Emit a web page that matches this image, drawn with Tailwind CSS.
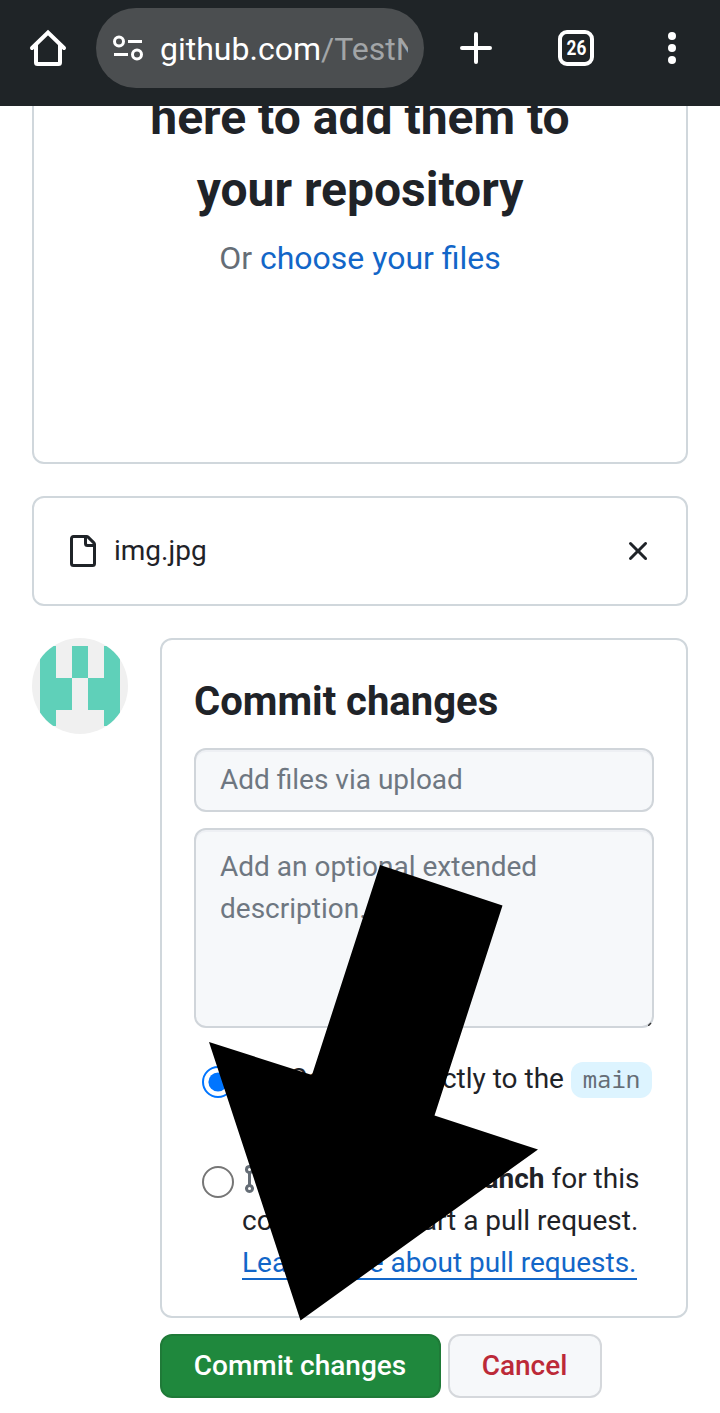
<!DOCTYPE html>
<html lang="en">
<head>
<meta charset="utf-8">
<title>Upload files</title>
<script src="https://cdn.jsdelivr.net/npm/@tailwindcss/browser@4"></script>
</head>
<body class="relative h-[1413px] w-[720px] overflow-hidden bg-white font-[Roboto,sans-serif] text-[28px] leading-[42px] text-[#1f2328]">
<header class="relative z-10 flex h-[106px] items-start bg-[#1f2427] text-white">
  <svg class="ml-7 mt-7 size-10 shrink-0" viewBox="0 0 40 40" fill="none" stroke="currentColor" stroke-width="4" stroke-linecap="round" stroke-linejoin="round"><path d="M4 20 20 4.600 36 20" stroke-linejoin="miter"/><path d="M8 17V34.500Q8 36 9.500 36H30.500Q32 36 32 34.500V17" stroke-linecap="butt"/></svg>
  <div class="ml-7 mt-2 flex h-20 w-[328px] items-center rounded-full bg-[#4b4e50] pl-4">
    <svg class="size-8 shrink-0" viewBox="0 0 32 32" fill="none" stroke="currentColor" stroke-width="3"><circle cx="7" cy="9.500" r="4.500"/><path d="M16 9.500h14M2 22.500h14"/><circle cx="25" cy="22.500" r="4.500"/></svg>
    <div class="ml-4 mt-0.5 w-[248px] overflow-hidden whitespace-nowrap text-[32px] leading-[40px]">github.com<span class="text-[#a2a5a7]">/TestN</span></div>
  </div>
  <svg class="ml-9 mt-8 size-8 shrink-0" viewBox="0 0 32 32" stroke="currentColor" stroke-width="4" stroke-linecap="round"><path d="M2 16h28M16 2v28"/></svg>
  <div class="ml-[66px] mt-[30px] flex size-9 shrink-0 items-center justify-center rounded-[9px] border-4 border-white"><span class="scale-x-[.86] text-[20px] leading-5 font-bold">26</span></div>
  <svg class="ml-[74px] mt-8 h-8 w-2 shrink-0" viewBox="0 0 8 32" fill="currentColor"><circle cx="4" cy="4" r="4"/><circle cx="4" cy="16" r="4"/><circle cx="4" cy="28" r="4"/></svg>
</header>

<main class="flex flex-col px-8">
  <section class="-mt-[70px] h-[428px] rounded-xl border-2 border-[#d0d7dc] px-16 pt-11 text-center">
    <h1 class="text-[48px] leading-[72px] font-bold">here to add them to your repository</h1>
    <p class="mt-2 text-[32px] leading-[48px] text-[#656d76]">Or <a class="text-[#1266c8]">choose your files</a></p>
  </section>

  <section class="mt-8 flex h-[110px] items-center rounded-xl border-2 border-[#d0d7dc] px-8">
    <svg class="size-8 shrink-0" viewBox="0 0 16 16" fill="currentColor"><path d="M2 1.750C2 .784 2.784 0 3.750 0h6.586c.464 0 .909.184 1.237.513l2.914 2.914c.329.328.513.773.513 1.237v9.586A1.750 1.750 0 0 1 13.250 16h-9.500A1.750 1.750 0 0 1 2 14.250Zm1.750-.25a.25.25 0 0 0-.25.25v12.500c0 .138.112.25.25.25h9.500a.25.25 0 0 0 .25-.25V6h-2.750A1.750 1.750 0 0 1 9 4.250V1.500Zm6.750.062V4.250c0 .138.112.25.25.25h2.688l-.011-.013-2.914-2.914-.013-.011Z"/></svg>
    <span class="ml-4 flex-1">img.jpg</span>
    <svg class="size-8 shrink-0" viewBox="0 0 16 16" fill="currentColor"><path d="M3.720 3.720a.75.75 0 0 1 1.060 0L8 6.940l3.220-3.220a.749.749 0 0 1 1.275.326.749.749 0 0 1-.215.734L9.060 8l3.220 3.220a.749.749 0 0 1-.326 1.275.749.749 0 0 1-.734-.215L8 9.060l-3.220 3.220a.751.751 0 0 1-1.042-.018.751.751 0 0 1-.018-1.042L6.940 8 3.720 4.780a.75.75 0 0 1 0-1.060Z"/></svg>
  </section>

  <div class="mt-8 flex items-start gap-8">
    <svg class="size-24 shrink-0 rounded-full bg-[#f0f0f0]" viewBox="0 0 96 96" fill="#5fd0b9" shape-rendering="crispEdges"><path d="M8 8h16v32h16v32H24v16H8ZM40 8h16v32H40ZM72 8h16v80H72V72H56V40h16Z"/></svg>
    <div class="w-[528px]">
      <section class="h-[680px] rounded-xl border-2 border-[#d0d7dc] p-8">
        <h2 class="text-[40px] leading-[60px] font-bold">Commit changes</h2>
        <div class="mt-4 flex h-16 items-center rounded-xl border-2 border-[#d0d5da] bg-[#f6f8fa] px-6 text-[#6e7781] shadow-[inset_0_2px_0_#eef0f4]">Add files via upload</div>
        <div class="relative mt-4 h-[200px] rounded-xl border-2 border-[#d0d5da] bg-[#f6f8fa] px-6 py-4 text-[#6e7781] shadow-[inset_0_2px_0_#eef0f4]">Add an optional extended description…
          <svg class="absolute right-0 bottom-0 size-1" viewBox="0 0 4 4" stroke="#333" stroke-width="1.500"><path d="M0 4 3 1"/></svg>
        </div>
        <div class="mt-[30px] flex items-start pl-2">
          <svg class="mt-2 size-8 shrink-0" viewBox="0 0 32 32"><circle cx="16" cy="16" r="15" fill="none" stroke="#0075ff" stroke-width="2"/><circle cx="16" cy="16" r="9.600" fill="#0075ff"/></svg>
          <p class="ml-2 flex items-center whitespace-nowrap">
            <svg class="mr-[15px] size-8 shrink-0 text-[#656d76]" viewBox="0 0 16 16" fill="currentColor"><path d="M11.930 8.500a4.002 4.002 0 0 1-7.860 0H.75a.75.75 0 0 1 0-1.500h3.320a4.002 4.002 0 0 1 7.860 0h3.320a.75.75 0 0 1 0 1.500Zm-1.430-.75a2.500 2.500 0 1 0-5 0 2.500 2.500 0 0 0 5 0Z"/></svg>
            <span>Commit directly to the</span><span class="ml-[7px] mt-0.5 flex h-9 w-[81px] items-center justify-center rounded-xl bg-[#ddf4ff] pb-0.5 font-['Noto_Sans_Mono','DejaVu_Sans_Mono',monospace] text-[24px] leading-8 text-[#656d76]">main</span>
          </p>
        </div>
        <div class="mt-[58px] flex items-start pl-2">
          <svg class="mt-2 size-8 shrink-0" viewBox="0 0 32 32"><circle cx="16" cy="16" r="15" fill="none" stroke="#767676" stroke-width="2"/></svg>
          <div class="ml-2 whitespace-nowrap">
            <p class="flex items-center"><svg class="mr-[15px] size-8 shrink-0 text-[#656d76]" viewBox="0 0 16 16" fill="currentColor"><path d="M1.500 3.250a2.250 2.250 0 1 1 3 2.122v5.256a2.251 2.251 0 1 1-1.500 0V5.372A2.250 2.250 0 0 1 1.500 3.250Zm5.677-.177L9.573.677A.25.25 0 0 1 10 .854V2.500h1A2.500 2.500 0 0 1 13.500 5v5.628a2.251 2.251 0 1 1-1.500 0V5a1 1 0 0 0-1-1h-1v1.646a.25.25 0 0 1-.427.177L7.177 3.427a.25.25 0 0 1 0-.354ZM3.750 2.500a.75.75 0 1 0 0 1.500.75.75 0 0 0 0-1.500Zm0 9.500a.75.75 0 1 0 0 1.500.75.75 0 0 0 0-1.500Zm8.250.75a.75.75 0 1 0 1.500 0 .75.75 0 0 0-1.500 0Z"/></svg><span>Create a <b>new branch</b> for this</span></p>
            <p>commit and start a pull request.</p>
            <p class="text-[#1266c8]"><a class="inline-block h-[38px] border-b-2 border-[#1266c8]">Learn more about pull requests.</a></p>
          </div>
        </div>
      </section>
      <div class="mt-4 flex gap-[7px] font-medium">
        <button class="h-16 w-[281px] rounded-xl border-2 border-[#1f7a38] bg-[#1f883d] pr-px text-white">Commit changes</button>
        <button class="h-16 w-[154px] rounded-xl border-2 border-[#d5d8dc] bg-[#f6f8fa] pr-px text-[#bc2a38]">Cancel</button>
      </div>
    </div>
  </div>
</main>

<svg class="absolute top-[865px] left-[209px] z-20 h-[456px] w-[330px]" viewBox="0 0 330 456"><path d="M171 0 293.500 40.500 225.500 250.500 329 284.500 91.500 455.500 0 177 103 210Z"/></svg>
</body>
</html>
